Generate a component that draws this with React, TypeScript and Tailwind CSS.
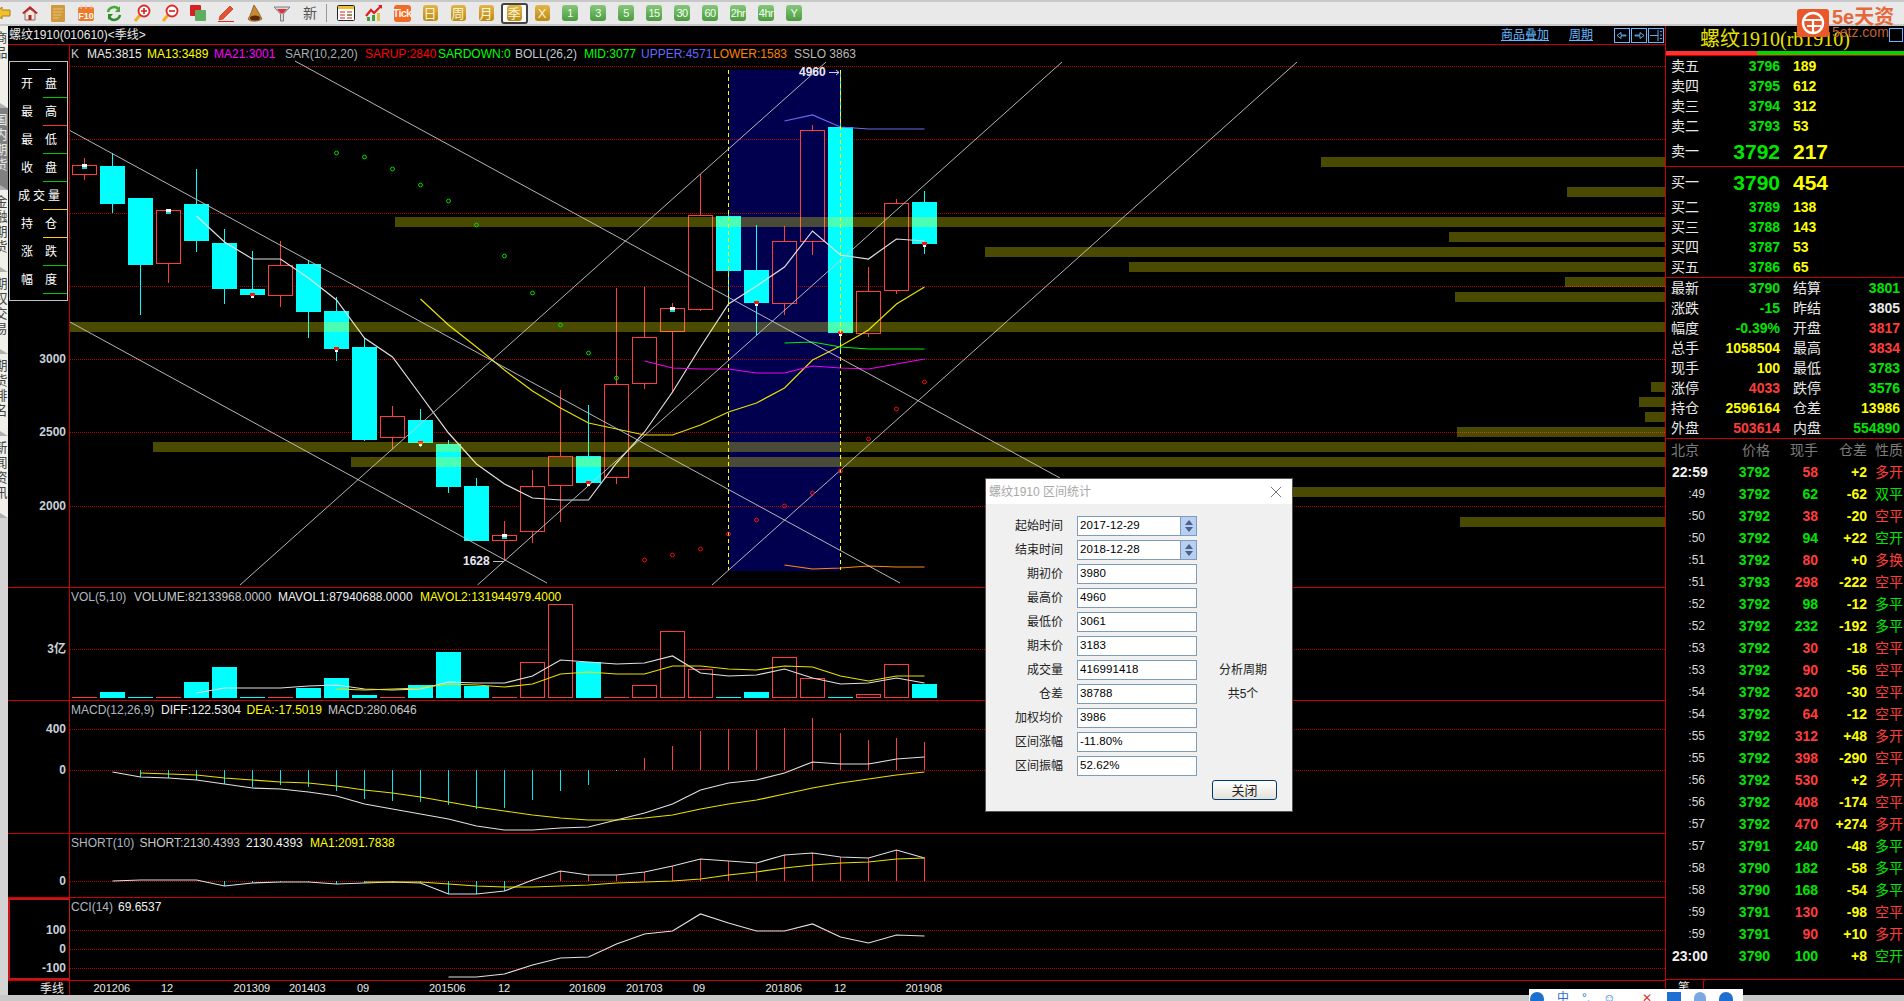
import React from "react";

const X = (i: number) => 84.5 + 28 * i;
type C = [number, number, number, number, boolean, number?];
// top, bottom, hi, lo, up (red hollow), marker
const candles: [number, number, number, number, boolean, string?][] = [
  [165, 174, 158, 180, true, "w"], [166, 204, 153, 213, false], [198, 265, 198, 315, false], [210, 263, 210, 283, true, "w"],
  [204, 241, 169, 252, false], [243, 289, 229, 304, false], [289, 295, 251, 297, false, "r"], [265, 295, 241, 307, true],
  [264, 312, 260, 338, false], [311, 349, 297, 361, false, "r"], [347, 440, 338, 441, false], [416, 437, 406, 449, true],
  [420, 443, 409, 447, false, "r"], [444, 487, 440, 493, false], [486, 541, 478, 541, false], [535, 540, 521, 561, true, "w"],
  [486, 531, 470, 543, true], [456, 485, 390, 522, true], [456, 483, 405, 483, false, "r"], [384, 477, 288, 484, true],
  [337, 383, 287, 389, true], [308, 331, 303, 393, true, "w"], [215, 309, 174, 311, true], [216, 271, 213, 306, false],
  [270, 303, 225, 335, false, "r"], [241, 303, 226, 315, true], [130, 241, 125, 255, true], [127, 333, 70, 350, false, "r"],
  [291, 333, 267, 337, true], [203, 290, 199, 294, true], [202, 244, 191, 254, false, "r"],
];
const olive: [number, number][] = [
  [157, 1321], [187, 1567], [217, 395], [232, 1449], [247, 985], [262, 1129], [277, 1565], [292, 1455], [322, 70],
  [382, 1651], [397, 1639], [412, 1645], [427, 1457], [442, 153], [457, 351], [487, 1000], [517, 1460],
];
const ma5 = [216, 242, 259, 259, 278, 300, 338, 357, 395, 433, 464, 484, 498, 500, 500, 463, 432, 392, 347, 304, 286, 267, 231, 255, 259, 239, 241];
const ma13 = [299, 325, 347, 370, 391, 408, 423, 429, 435, 435, 425, 412, 403, 388, 360, 346, 330, 304, 287];
const ma21 = [361, 368, 369, 369, 373, 373, 366, 368, 369, 364, 359];
const upper = [121, 115, 127, 129, 129, 129];
const mid = [343, 342, 347, 349, 349, 349];
const lower = [565, 569, 568, 566, 567, 567];
const sarG = [153, 157, 169, 185, 201, 225, 256, 293, 325, 353, 378];
const sarR = [560, 555, 549, 534, 520, 506, 493, 471, 439, 409, 382];
const vols: [number, boolean, boolean][] = [
  [697, true, true], [692, false, false], [696, false, true], [697, true, true], [682, false, false], [667, false, false], [696, false, true], [697, true, true],
  [688, false, false], [678, false, false], [695, false, false], [697, true, true], [685, false, false], [652, false, false], [686, false, false], [697, true, true],
  [662, true, false], [604, true, false], [662, false, false], [697, true, true], [685, true, false], [631, true, false], [669, true, false], [696, false, true],
  [692, false, false], [657, true, false], [678, true, false], [696, false, true], [694, true, false], [664, true, false], [684, false, false],
];
const volW = [693, 688, 688, 688, 686, 685, 689, 690, 689, 682, 683, 683, 676, 660, 662, 664, 663, 656, 673, 676, 675, 669, 678, 684, 683, 678, 683];
const volY = [689, 690, 689, 688, 684, 685, 687, 684, 674, 672, 674, 674, 666, 666, 669, 670, 666, 667, 676, 681, 676, 676];
const macdHist = [0, 0, 777, 778, 780, 784, 787, 785, 787, 791, 799, 801, 802, 805, 809, 808, 800, 791, 785, 771, 758, 746, 731, 729, 730, 728, 718, 733, 740, 738, 742];
const diff = [772, 777, 778, 780, 784, 788, 789, 792, 796, 804, 809, 814, 819, 826, 830, 830, 828, 827, 820, 813, 804, 790, 783, 780, 773, 762, 764, 764, 759, 757];
const dea = [773, 774, 775, 778, 780, 782, 783, 786, 790, 793, 797, 802, 807, 811, 815, 818, 820, 820, 818, 815, 809, 804, 800, 794, 788, 783, 779, 775, 772];
const shortW = [881, 880, 880, 880, 886, 883, 882, 882, 884, 883, 882, 883, 894, 894, 891, 880, 871, 875, 875, 872, 866, 859, 861, 863, 855, 853, 857, 858, 850, 858];
const shortY = [882, 882, 882, 884, 886, 887, 887, 886, 885, 883, 882, 881, 879, 875, 872, 868, 865, 863, 862, 859, 858];
const cci = [977, 977, 974, 965, 958, 957, 944, 934, 931, 914, 923, 931, 931, 924, 937, 943, 935, 936];

function Line({ start, ys, color, w = 1.2 }: { start: number; ys: number[]; color: string; w?: number }) {
  return <polyline points={ys.map((y, k) => `${X(start + k)},${y}`).join(" ")} fill="none" stroke={color} strokeWidth={w} />;
}
function Grid({ ys }: { ys: number[] }) {
  return (
    <>
      {ys.map((y) => (
        <line key={y} x1={70} x2={1665} y1={y + 0.5} y2={y + 0.5} stroke="#b80000" strokeDasharray="1 1" />
      ))}
    </>
  );
}
function Plot({ y0, h, children, legend }: { y0: number; h: number; children: React.ReactNode; legend: [string, string, number][] }) {
  return (
    <div className="relative flex-1 overflow-hidden">
      <svg className="absolute inset-0 h-full w-full" viewBox={`70 ${y0} 1595 ${h}`}>{children}</svg>
      <Legend items={legend} />
    </div>
  );
}
function Legend({ items }: { items: [string, string, number][] }) {
  return (
    <div className="relative flex h-[18px] items-center whitespace-nowrap pl-[1px] text-[12px] leading-none">
      {items.map(([t, c, w]) => (
        <span key={t} className={`shrink-0 ${c}`} style={{ width: w }}>{t}</span>
      ))}
    </div>
  );
}
function Axis({ labels, y0, selected }: { labels: [string, number][]; y0: number; selected?: boolean }) {
  return (
    <div className={`relative w-[62px] shrink-0 border-r border-[#c80000] ${selected ? "border-2 border-[#c81414]" : ""}`}>
      {labels.map(([t, y]) => (
        <span key={t} className="absolute right-[3px] -translate-y-1/2 text-[12px] font-bold leading-none text-[#c8d0d8]" style={{ top: y - y0 }}>{t}</span>
      ))}
    </div>
  );
}

const infoRows: [string, string, string][] = [
  ["开", "盘", "bg-[#00c800]"], ["最", "高", "bg-[#ff3232]"], ["最", "低", "bg-[#00c800]"], ["收", "盘", "bg-[#00c800]"],
  ["成交", "量", "bg-[#ffd000]"], ["持", "仓", "bg-[#ffd000]"], ["涨", "跌", "bg-[#00c800]"], ["幅", "度", "bg-[#00c800]"],
];
function InfoBox() {
  return (
    <div className="ml-[1px] mt-[16px] h-[240px] w-[59px] border border-[#c0c0c0] pt-[7px] text-[12px] leading-none text-white">
      <div className="ml-[18px] h-px w-[23px] bg-[#e0e0ff]" />
      {infoRows.map(([a, b, c], i) => (
        <div key={i} className="relative flex h-[28px] items-center">
          {a.length > 1 ? (
            <div className="flex gap-[3px] pl-[8px]"><span>成</span><span>交</span><span>量</span></div>
          ) : (
            <div className="flex gap-[12px] pl-[11px]"><span>{a}</span><span>{b}</span></div>
          )}
          <div className={`absolute bottom-0 right-0 h-px w-[24px] ${c}`} />
        </div>
      ))}
    </div>
  );
}

const sideTabs: [string, boolean][] = [["商品", false], ["国内期货", true], ["金融期货", false], ["期权交易", false], ["期货排名", false], ["新闻资讯", false]];
function SideTabs() {
  return (
    <div className="flex w-[8px] shrink-0 flex-col overflow-hidden bg-[#d4d4d4]">
      {sideTabs.map(([t, a]) => (
        <div key={t} className={`relative h-[82px] shrink-0 overflow-hidden ${a ? "bg-[#808080] text-[#e8e8e8]" : "bg-[#f0f0e8] text-[#444]"}`}>
          <div className="-ml-[6px] w-[14px] pt-[4px] text-center text-[13px] leading-[15px]">
            {t.split("").map((c, i) => <div key={i}>{c}</div>)}
          </div>
          <div className="absolute bottom-0 left-0 h-0 w-0 border-b-[5px] border-r-[8px] border-b-[#b0b0b0] border-r-transparent" />
        </div>
      ))}
    </div>
  );
}

function Gold({ t }: { t: string }) {
  return <div className="flex h-[16px] w-[15px] items-center justify-center rounded-[3px] bg-linear-to-b from-[#e3b64a] to-[#b98a14] text-[13px] leading-none text-[#fff4d0]">{t}</div>;
}
function Green({ t }: { t: string }) {
  return <div className="flex h-[16px] w-[16px] items-center justify-center rounded-[3px] bg-linear-to-b from-[#86c77a] to-[#4c9c40] text-[11px] leading-none tracking-[-0.5px] text-[#f0fff0]">{t}</div>;
}
const Ic = ({ children }: { children: React.ReactNode }) => <svg width="18" height="18" viewBox="0 0 18 18">{children}</svg>;
const icons: React.ReactNode[] = [
  <Ic><path d="M2 9 L9 3 V6 H17 V12 H9 V15 Z" fill="#f0c030" stroke="#b08010" /></Ic>,
  <Ic><path d="M1 9 L9 2 L17 9 L15 10 L9 5 L3 10 Z" fill="#c02020" /><path d="M4 9 L9 5 L14 9 V16 H4 Z" fill="#f0e8e0" stroke="#a06060" /><rect x="7.5" y="11" width="3" height="5" fill="#a03020" /></Ic>,
  <Ic><rect x="2" y="1" width="14" height="17" rx="1" fill="#cf9a3c" /><path d="M4 5h10M4 8h10M4 11h8M4 14h6" stroke="#e9c27a" /></Ic>,
  <Ic><rect x="1" y="3" width="16" height="14" rx="2" fill="#ec7a28" /><path d="M4 1v4M9 1v4M14 1v4" stroke="#fbb" /><text x="9" y="15" textAnchor="middle" fontSize="9" fontWeight="bold" fill="#fff" fontFamily="Liberation Sans">F10</text></Ic>,
  <Ic><path d="M3 8 A6 6 0 0 1 14 6" fill="none" stroke="#48a838" strokeWidth="2.5" /><path d="M15 2 V8 H10 Z" fill="#48a838" /><path d="M15 11 A6 6 0 0 1 4 13" fill="none" stroke="#2e8e2a" strokeWidth="2.5" /><path d="M3 16 V10 H8 Z" fill="#2e8e2a" /></Ic>,
  <Ic><path d="M7 11 L2 17" stroke="#f0b020" strokeWidth="3" /><circle cx="11" cy="7" r="5.5" fill="#fff" stroke="#e02828" strokeWidth="1.8" /><path d="M8 7h6M11 4v6" stroke="#d02020" strokeWidth="1.6" /></Ic>,
  <Ic><path d="M7 11 L2 17" stroke="#f0b020" strokeWidth="3" /><circle cx="11" cy="7" r="5.5" fill="#fff" stroke="#e02828" strokeWidth="1.8" /><path d="M8 7h6" stroke="#d02020" strokeWidth="1.6" /></Ic>,
  <Ic><rect x="1" y="1" width="11" height="11" rx="1" fill="#d82020" /><rect x="6" y="6" width="11" height="11" rx="1" fill="#5fae5f" /></Ic>,
  <Ic><path d="M3 12 L13 2 L16 5 L6 15 L2 16 Z" fill="#ea5030" stroke="#b02010" strokeWidth=".6" /><path d="M1 17.5h16" stroke="#e03020" /></Ic>,
  <Ic><path d="M9 1 C12 5 15 11 17 15 C13 18 5 18 3 15 C6 11 7 5 9 1 Z" fill="#c88a30" stroke="#6a4010" strokeWidth=".6" /><ellipse cx="10" cy="14" rx="5" ry="2.5" fill="#5a2a08" /></Ic>,
  <Ic><path d="M1 3 H17 L10.5 10 V17 H7.5 V10 Z" fill="#d8d8d8" stroke="#808080" /><path d="M4 5 H14 L10 9.5 H8 Z" fill="#e03040" /></Ic>,
  <span className="text-[14px] leading-none text-[#555]">新</span>,
];
const icons2: React.ReactNode[] = [
  <Ic><rect x="0.5" y="1.5" width="17" height="15" rx="1" fill="#fff" stroke="#222" /><rect x="1" y="2" width="16" height="3" fill="#e8c030" /><path d="M3 8h5M10 8h5M3 11h5M10 11h5M3 14h5M10 14h5" stroke="#d02020" /><path d="M10 11h5" stroke="#20a020" /></Ic>,
  <Ic><path d="M1 12 L6 6 L9 9 L16 2" fill="none" stroke="#e02020" strokeWidth="2.2" /><path d="M13 1h4v4z" fill="#e02020" /><rect x="2" y="13" width="3" height="4" fill="#40a040" /><rect x="7" y="11" width="3" height="6" fill="#40a040" /><rect x="12" y="9" width="3" height="8" fill="#e0c040" /></Ic>,
  <div className="flex h-[17px] w-[17px] items-center justify-center rounded-[3px] bg-[#f06a28] text-[11px] font-bold leading-none tracking-[-0.8px] text-[#fff0e0]">Tick</div>,
  <Gold t="日" />, <Gold t="周" />, <Gold t="月" />,
  <div className="flex h-[21px] w-[27px] items-center justify-center rounded-[3px] border-2 border-[#444] bg-white"><Gold t="季" /></div>,
  <Gold t="X" />,
  ...["1", "3", "5", "15", "30", "60", "2hr", "4hr", "Y"].map((t) => <Green t={t} />),
];
function Toolbar() {
  const slot = "flex h-full w-[28px] shrink-0 items-center justify-center";
  return (
    <div className="flex h-[26px] shrink-0 items-center overflow-hidden border-b-2 border-t-2 border-[#c8c8c8] bg-[#e9e9e9] pl-0">
      <div className={`${slot} -ml-[12px]`}>{icons[0]}</div>
      {icons.slice(1).map((n, i) => <div key={i} className={slot}>{n}</div>)}
      <div className="h-full w-[8px] shrink-0 py-[2px] pl-[2px]"><div className="h-full w-px bg-[#999]" /></div>
      {icons2.map((n, i) => <div key={i} className={slot}>{n}</div>)}
    </div>
  );
}

type Side = "g" | "r" | "y" | "w";
const clr: Record<Side, string> = { g: "text-[#00e600]", r: "text-[#ff3c3c]", y: "text-[#ffff00]", w: "text-[#e8e8e8]" };
const asks: [string, string, string][] = [["卖五", "3796", "189"], ["卖四", "3795", "612"], ["卖三", "3794", "312"], ["卖二", "3793", "53"]];
const bids: [string, string, string][] = [["买二", "3789", "138"], ["买三", "3788", "143"], ["买四", "3787", "53"], ["买五", "3786", "65"]];
const stats: [string, string, Side, string, string, Side][] = [
  ["最新", "3790", "g", "结算", "3801", "g"], ["涨跌", "-15", "g", "昨结", "3805", "w"], ["幅度", "-0.39%", "g", "开盘", "3817", "r"],
  ["总手", "1058504", "y", "最高", "3834", "r"], ["现手", "100", "y", "最低", "3783", "g"], ["涨停", "4033", "r", "跌停", "3576", "g"],
  ["持仓", "2596164", "y", "仓差", "13986", "y"], ["外盘", "503614", "r", "内盘", "554890", "g"],
];
const ticks: [string, string, string, Side, string, string, Side][] = [
  ["22:59", "3792", "58", "r", "+2", "多开", "r"], [":49", "3792", "62", "g", "-62", "双平", "g"], [":50", "3792", "38", "r", "-20", "空平", "r"],
  [":50", "3792", "94", "g", "+22", "空开", "g"], [":51", "3792", "80", "r", "+0", "多换", "r"], [":51", "3793", "298", "r", "-222", "空平", "r"],
  [":52", "3792", "98", "g", "-12", "多平", "g"], [":52", "3792", "232", "g", "-192", "多平", "g"], [":53", "3792", "30", "r", "-18", "空平", "r"],
  [":53", "3792", "90", "r", "-56", "空平", "r"], [":54", "3792", "320", "r", "-30", "空平", "r"], [":54", "3792", "64", "r", "-12", "空平", "r"],
  [":55", "3792", "312", "r", "+48", "多开", "r"], [":55", "3792", "398", "r", "-290", "空平", "r"], [":56", "3792", "530", "r", "+2", "多开", "r"],
  [":56", "3792", "408", "r", "-174", "空平", "r"], [":57", "3792", "470", "r", "+274", "多开", "r"], [":57", "3791", "240", "g", "-48", "多平", "g"],
  [":58", "3790", "182", "g", "-58", "多平", "g"], [":58", "3790", "168", "g", "-54", "多平", "g"], [":59", "3791", "130", "r", "-98", "空平", "r"],
  [":59", "3791", "90", "r", "+10", "多开", "r"], ["23:00", "3790", "100", "g", "+8", "空开", "g"],
];
function Book({ rows }: { rows: [string, string, string][] }) {
  return (
    <>
      {rows.map(([a, b, c]) => (
        <div key={a} className="grid h-[20px] grid-cols-[114px_1fr] items-center">
          <div className="flex justify-between pl-[5px] text-[14px] text-[#e8e8e8]"><span>{a}</span><span className="font-bold text-[#00e600]">{b}</span></div>
          <span className="pl-[13px] text-[14px] font-bold text-[#ffff00]">{c}</span>
        </div>
      ))}
    </>
  );
}
function Big({ l, p, v }: { l: string; p: string; v: string }) {
  return (
    <div className="grid h-[30px] grid-cols-[114px_1fr] items-center">
      <div className="flex items-center justify-between pl-[5px]"><span className="text-[14px] text-[#e8e8e8]">{l}</span><span className="text-[21px] font-bold leading-none text-[#00e600]">{p}</span></div>
      <span className="pl-[13px] text-[21px] font-bold leading-none text-[#ffff00]">{v}</span>
    </div>
  );
}
function RightPanel() {
  return (
    <div className="relative flex w-[239px] shrink-0 flex-col border-l border-[#c80000] leading-none">
      <div className="h-[25px] pl-[34px] pt-[3px] text-[20px] leading-none text-[#e8e000] [font-family:'Liberation_Serif','Noto_Sans_CJK_SC',serif]">螺纹1910(rb1910)</div>
      <div className="flex h-[5px] border-b border-[#c80000]"><div className="w-[91px] bg-[#ff3232]" /><div className="flex-1 bg-[#00d800]" /></div>
      <Book rows={asks} />
      <Big l="卖一" p="3792" v="217" />
      <div className="h-px bg-[#c80000]" />
      <Big l="买一" p="3790" v="454" />
      <Book rows={bids} />
      <div className="h-px bg-[#c80000]" />
      {stats.map(([a, b, bc, c, d, dc]) => (
        <div key={a} className="grid h-[20px] grid-cols-[114px_1fr] items-center text-[14px]">
          <div className="flex justify-between pl-[5px]"><span className="text-[#e8e8e8]">{a}</span><span className={`font-bold ${clr[bc]}`}>{b}</span></div>
          <div className="flex justify-between pl-[13px] pr-[4px]"><span className="text-[#e8e8e8]">{c}</span><span className={`font-bold ${clr[dc]}`}>{d}</span></div>
        </div>
      ))}
      <div className="h-px bg-[#c80000]" />
      <div className="grid h-[22px] grid-cols-[40px_64px_48px_49px_1fr] items-center text-[14px] text-[#7c7c7c]">
        <span className="whitespace-nowrap pl-[5px]">北京</span><span className="text-right">价格</span><span className="text-right">现手</span><span className="text-right">仓差</span><span className="pl-[8px]">性质</span>
      </div>
      {ticks.map(([t, p, h, hc, d, ty, tc], i) => (
        <div key={i} className="grid h-[22px] grid-cols-[40px_64px_48px_49px_1fr] items-center text-[14px]">
          <span className={t.length > 3 ? "whitespace-nowrap pl-[6px] font-bold text-[#f0f0f0]" : "pr-[1px] text-right text-[12px] text-[#d8d8d8]"}>{t}</span>
          <span className="text-right font-bold text-[#00e600]">{p}</span>
          <span className={`text-right font-bold ${clr[hc]}`}>{h}</span>
          <span className="text-right font-bold text-[#ffff00]">{d}</span>
          <span className={`pl-[8px] ${clr[tc]}`}>{ty}</span>
        </div>
      ))}
      <div className="flex-1" />
      <div className="flex h-[16px] shrink-0 border-t border-[#c80000]">
        <div className="w-[37px] pl-[12px] pt-[2px] text-[12px] text-[#e8e8e8]">笔</div>
        <div className="flex-1 rounded-tl-[3px] border-l border-t border-[#c80000] -mt-px" />
      </div>
    </div>
  );
}

const fields: [string, string, boolean?, string?][] = [
  ["起始时间", "2017-12-29", true], ["结束时间", "2018-12-28", true], ["期初价", "3980"], ["最高价", "4960"], ["最低价", "3061"], ["期末价", "3183"],
  ["成交量", "416991418", false, "分析周期"], ["仓差", "38788", false, "共5个"], ["加权均价", "3986"], ["区间涨幅", "-11.80%"], ["区间振幅", "52.62%"],
];
function Dialog() {
  return (
    <div className="absolute left-[985px] top-[478px] flex h-[334px] w-[308px] flex-col border border-[#555] bg-[#f0f0f0] text-[12px] leading-none text-[#222]">
      <div className="flex h-[25px] shrink-0 items-center justify-between bg-white pl-[3px] pr-[10px] text-[#a8a8a8]">
        <span>螺纹1910 区间统计</span>
        <svg width="12" height="12" viewBox="0 0 12 12"><path d="M1 1 L11 11 M11 1 L1 11" stroke="#777" /></svg>
      </div>
      <div className="flex flex-1 flex-col gap-[4px] pt-[12px]">
        {fields.map(([l, v, spin, extra]) => (
          <div key={l} className="flex h-[20px] items-center">
            <span className="w-[77px] text-right">{l}</span>
            <div className="ml-[14px] flex h-[20px] w-[120px] border border-[#7f9db9] bg-white">
              <span className="flex flex-1 items-center pl-[2px] text-[11.5px] tracking-[0.1px] text-black">{v}</span>
              {spin && (
                <div className="flex w-[16px] flex-col items-center justify-center gap-[2px] border-l border-[#7f9db9] bg-[#b8cff4]">
                  <svg width="8" height="5" viewBox="0 0 8 5"><path d="M4 0 L8 5 H0 Z" fill="#4d6185" /></svg>
                  <svg width="8" height="5" viewBox="0 0 8 5"><path d="M0 0 H8 L4 5 Z" fill="#4d6185" /></svg>
                </div>
              )}
            </div>
            {extra && <span className="w-[92px] text-center">{extra}</span>}
          </div>
        ))}
        <div className="ml-[226px] flex h-[20px] w-[65px] items-center justify-center rounded-[3px] border border-[#003c74] bg-linear-to-b from-white to-[#e4e2d8] text-[13px]">关闭</div>
      </div>
    </div>
  );
}

function CandleLayer() {
  return (
    <>
      {candles.map(([t, b, hi, lo, up, m], i) => {
        const x = X(i);
        const col = up ? "#ff3c3c" : "#00ffff";
        return (
          <g key={i} shapeRendering="crispEdges">
            <line x1={x} x2={x} y1={hi} y2={lo} stroke={col} />
            {up ? (
              <rect x={x - 12} y={t + 0.5} width={24} height={b - t} fill={i >= 23 && i <= 26 ? "#00004f" : "#000"} stroke={col} />
            ) : (
              <rect x={x - 12.5} y={t} width={25} height={b - t} fill={col} />
            )}
            {m === "w" && <><rect x={x - 2.5} y={t - 1} width={5} height={2.5} fill="#fff" /><rect x={x - 2.5} y={t + 1.5} width={5} height={2} fill="#20d0d0" /></>}
            {m === "r" && <><rect x={x - 2.5} y={b - 2} width={5} height={3} fill="#ff1010" /><rect x={x - 1.5} y={b + 1} width={3} height={2} fill="#fff" /></>}
          </g>
        );
      })}
    </>
  );
}

export default function App() {
  return (
    <div className="relative flex h-[1001px] w-[1904px] flex-col overflow-hidden bg-black [font-family:'Liberation_Sans','Noto_Sans_CJK_SC',sans-serif]">
      <Toolbar />
      <div className="flex flex-1 overflow-hidden">
        <SideTabs />
        <div className="flex w-[1657px] shrink-0 flex-col">
          <div className="flex h-[19px] shrink-0 items-center justify-between border-b border-[#c80000] pl-[1px] text-[12px] leading-none text-[#e8e8e8]">
            <span>螺纹1910(010610)&lt;季线&gt;</span>
            <div className="flex items-center text-[#66b8ff]">
              <span className="underline">商品叠加</span>
              <span className="ml-[20px] underline">周期</span>
              <div className="ml-[21px] mr-[1px] flex gap-[1px]">
                {[<path d="M11 7 H6 V4 L2 7.5 L6 11 V8 H11 Z" fill="none" stroke="#66b8ff" />, <path d="M3 7 H8 V4 L12 7.5 L8 11 V8 H3 Z" fill="none" stroke="#66b8ff" />, <path d="M1 7.5 H9 M9 1 V14 M11 3 H13 M11 7 H13 M11 11 H13" fill="none" stroke="#66b8ff" />].map((p, i) => (
                  <svg key={i} width="16" height="15" viewBox="0 0 14 15" className="border border-[#66b8ff]" preserveAspectRatio="none">{p}</svg>
                ))}
              </div>
            </div>
          </div>
          <div className="flex h-[543px] shrink-0 border-b border-[#c80000]">
            <div className="relative w-[62px] shrink-0 border-r border-[#c80000]">
              <InfoBox />
              {([["3000", 359], ["2500", 432], ["2000", 506]] as [string, number][]).map(([t, y]) => (
                <span key={t} className="absolute right-[3px] -translate-y-1/2 text-[12px] font-bold leading-none text-[#c8d0d8]" style={{ top: y - 45 }}>{t}</span>
              ))}
            </div>
            <Plot
              y0={45}
              h={542}
              legend={[
                ["K", "text-[#c0c8d0]", 16], ["MA5:3815", "text-[#e8e8e8]", 60], ["MA13:3489", "text-[#ffff00]", 67], ["MA21:3001", "text-[#ff00ff]", 71],
                ["SAR(10,2,20)", "text-[#a8b0b8]", 80], ["SARUP:2840", "text-[#ff0000]", 73], ["SARDOWN:0", "text-[#00ff00]", 77], ["BOLL(26,2)", "text-[#c0c8d0]", 69],
                ["MID:3077", "text-[#00ff00]", 57], ["UPPER:4571", "text-[#6666ff]", 72], ["LOWER:1583", "text-[#ff8000]", 81], ["SSLO 3863", "text-[#b8b8b8]", 70],
              ]}
            >
              <rect x={728.5} y={70} width={112} height={501} fill="#00004f" />
              <Grid ys={[66, 139, 213, 286, 359, 432, 506]} />
              <CandleLayer />
              <Line start={4} ys={ma5} color="#e0e0e0" />
              <Line start={12} ys={ma13} color="#e8e000" />
              <Line start={20} ys={ma21} color="#f000f0" />
              <Line start={25} ys={upper} color="#6a6af0" />
              <Line start={25} ys={mid} color="#00f000" />
              <Line start={25} ys={lower} color="#ff8a10" />
              <line x1={728.5} x2={728.5} y1={70} y2={570} stroke="#ffff00" strokeDasharray="4 3" shapeRendering="crispEdges" />
              <line x1={840.5} x2={840.5} y1={70} y2={570} stroke="#ffff00" strokeDasharray="4 3" shapeRendering="crispEdges" />
              {olive.map(([y, x]) => <rect key={y} x={x} y={y} width={1665 - x} height={10} fill="#ffff00" fillOpacity={0.29} />)}
              {[[295, 61, 1060, 478], [69, 130, 900, 583], [70, 322, 547, 583], [240, 585, 826, 62], [477.5, 585, 1062, 62], [712, 585, 1297, 62]].map(([a, b, c, d], i) => (
                <line key={i} x1={a} y1={b} x2={c} y2={d} stroke="#c8c8c8" strokeWidth={0.9} />
              ))}
              {sarG.map((y, i) => <circle key={i} cx={X(9 + i - 0) - 0} cy={y} r={1.9} fill="none" stroke="#00e000" />)}
              {sarR.map((y, i) => <circle key={i} cx={X(20 + i)} cy={y} r={1.9} fill="none" stroke="#f01010" />)}
              <text x={799} y={76} fontSize={12} fontWeight="bold" fill="#e8e8f0">4960</text>
              <path d="M829 72.5 H839 M836 70 L839 72.5 L836 75" stroke="#d0d0e0" fill="none" />
              <text x={463} y={565} fontSize={12} fontWeight="bold" fill="#e8e8f0">1628</text>
              <path d="M493 561.5 H504" stroke="#c0c0c0" />
            </Plot>
          </div>
          <div className="flex h-[113px] shrink-0 border-b border-[#c80000]">
            <Axis labels={[["3亿", 649]]} y0={588} />
            <Plot
              y0={588}
              h={112}
              legend={[["VOL(5,10)", "text-[#b0b8c0]", 63], ["VOLUME:82133968.0000", "text-[#c8c8c8]", 144], ["MAVOL1:87940688.0000", "text-[#f0f0f0]", 142], ["MAVOL2:131944979.4000", "text-[#ffff00]", 160]]}
            >
              <Grid ys={[649]} />
              {vols.map(([t, up, thin], i) =>
                thin ? (
                  <rect key={i} x={X(i) - 12.5} y={697} width={25} height={1} fill={up ? "#ff3c3c" : "#00ffff"} shapeRendering="crispEdges" />
                ) : up ? (
                  <rect key={i} x={X(i) - 12} y={t + 0.5} width={24} height={697 - t} fill="#000" stroke="#ff3c3c" shapeRendering="crispEdges" />
                ) : (
                  <rect key={i} x={X(i) - 12.5} y={t} width={25} height={698 - t} fill="#00ffff" shapeRendering="crispEdges" />
                ),
              )}
              <Line start={4} ys={volW} color="#e0e0e0" />
              <Line start={9} ys={volY} color="#e8e000" />
            </Plot>
          </div>
          <div className="flex h-[133px] shrink-0 border-b border-[#c80000]">
            <Axis labels={[["400", 729], ["0", 770]]} y0={701} />
            <Plot
              y0={701}
              h={132}
              legend={[["MACD(12,26,9)", "text-[#b0b8c0]", 90], ["DIFF:122.5304", "text-[#f0f0f0]", 85.5], ["DEA:-17.5019", "text-[#ffff00]", 81.5], ["MACD:280.0646", "text-[#c8c8c8]", 100]]}
            >
              <Grid ys={[729, 770]} />
              {macdHist.map((y, i) => (y ? <line key={i} x1={X(i)} x2={X(i)} y1={770} y2={y} stroke={y > 770 ? "#00e8f0" : "#ff3c3c"} shapeRendering="crispEdges" /> : null))}
              <Line start={1} ys={diff} color="#e0e0e0" />
              <Line start={2} ys={dea} color="#e8e000" />
            </Plot>
          </div>
          <div className="flex h-[64px] shrink-0 border-b border-[#c80000]">
            <Axis labels={[["0", 881]]} y0={834} />
            <Plot
              y0={834}
              h={63}
              legend={[["SHORT(10)", "text-[#b0b8c0]", 68.5], ["SHORT:2130.4393", "text-[#c8c8c8]", 106.5], ["2130.4393", "text-[#f0f0f0]", 64], ["MA1:2091.7838", "text-[#ffff00]", 100]]}
            >
              <Grid ys={[881]} />
              {shortW.map((y, i) => (i > 3 ? <line key={i} x1={X(i + 1)} x2={X(i + 1)} y1={881} y2={y} stroke={y > 881 ? "#00e8f0" : "#ff3c3c"} shapeRendering="crispEdges" /> : null))}
              <Line start={1} ys={shortW} color="#e0e0e0" />
              <Line start={10} ys={shortY} color="#e8e000" />
            </Plot>
          </div>
          <div className="flex h-[82px] shrink-0">
            <Axis labels={[["100", 930], ["0", 949], ["-100", 968]]} y0={900} selected />
            <Plot y0={898} h={82} legend={[["CCI(14)", "text-[#b0b8c0]", 47], ["69.6537", "text-[#f0f0f0]", 60]]}>
              <Grid ys={[930, 949, 968]} />
              <Line start={13} ys={cci} color="#e0e0e0" />
            </Plot>
          </div>
          <div className="flex h-[16px] shrink-0 items-center border-t border-[#c80000] text-[11px] leading-none text-[#e8e8e8]">
            <div className="flex h-full w-[62px] shrink-0 items-center justify-end border-r border-[#c80000] pr-[5px] text-[12px]">季线</div>
            <div className="relative h-full flex-1">
              {([["201206", 93.5], ["12", 161], ["201309", 233.5], ["201403", 289], ["09", 357], ["201506", 429], ["12", 498], ["201609", 569], ["201703", 626], ["09", 693], ["201806", 765.5], ["12", 834], ["201908", 905.5]] as [string, number][]).map(([t, x]) => (
                <span key={x} className="absolute top-[2px]" style={{ left: x - 70 }}>{t}</span>
              ))}
            </div>
          </div>
        </div>
        <RightPanel />
      </div>
      <div className="relative h-[6px] shrink-0 bg-[#c8c8c8]" />

      <Dialog />

      {/* watermark logo */}
      <div className="absolute left-[1797px] top-[9px] flex items-start gap-[3px]">
        <svg width="32" height="28" viewBox="0 0 32 28">
          <rect width="32" height="28" rx="3" fill="#e8582a" />
          <circle cx="16" cy="14" r="10" fill="none" stroke="#fff" strokeWidth="2.4" />
          <path d="M7 11 H25 M10 17 H24 M16 11 V24" stroke="#fff" strokeWidth="2.2" fill="none" />
        </svg>
        <div className="flex flex-col leading-none">
          <span className="text-[20px] font-bold leading-[16px] text-[#e8673a]">5e天资</span>
          <span className="text-[14px] leading-[14px] text-[#c06030]">5etz.com</span>
        </div>
      </div>
      <div className="absolute left-[1889px] top-[28px] h-[14px] w-[14px] border border-[#66b8ff]" />

      {/* input method bar */}
      <div className="absolute left-[1529px] top-[989px] flex h-[12px] w-[214px] items-start gap-[13px] overflow-hidden bg-white pl-[1px] pt-[3px] text-[12px] leading-none text-[#1f6fd0]">
        <span className="h-[14px] w-[14px] shrink-0 rounded-full bg-[#1f6fd0]" />
        <span>中</span>
        <span>°,</span>
        <span>☺</span>
        <span className="ml-[14px] text-[#e03030]">✕</span>
        <span className="ml-[2px] h-[10px] w-[14px] shrink-0 bg-[#1f6fd0]" />
        <span className="h-[10px] w-[12px] shrink-0 rounded-t-full bg-[#7aa8e0]" />
        <span className="h-[10px] w-[14px] shrink-0 rounded-t-full bg-[#1f6fd0]" />
        <span className="h-[10px] w-[14px] shrink-0 rounded-t-full bg-[#1f6fd0]" />
      </div>
    </div>
  );
}
